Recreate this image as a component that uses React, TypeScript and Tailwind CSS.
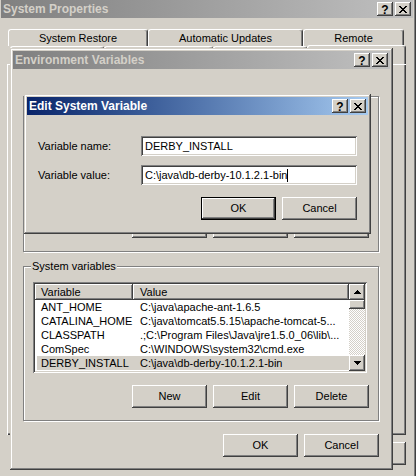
import React from "react";

const RAISED =
  "shadow-[inset_-1px_-1px_#404040,inset_1px_1px_#ffffff,inset_-2px_-2px_#808080,inset_2px_2px_#d4d0c8]";
const FRAME =
  "shadow-[inset_-1px_-1px_#404040,inset_1px_1px_#d4d0c8,inset_-2px_-2px_#808080,inset_2px_2px_#ffffff]";
const SUNKEN =
  "shadow-[inset_1px_1px_#808080,inset_-1px_-1px_#ffffff,inset_2px_2px_#404040,inset_-2px_-2px_#d4d0c8]";

const X_PIX: [number, number][] = [
  [0, 0], [1, 0], [6, 0], [7, 0],
  [1, 1], [2, 1], [5, 1], [6, 1],
  [2, 2], [3, 2], [4, 2], [5, 2],
  [3, 3], [4, 3],
  [2, 4], [3, 4], [4, 4], [5, 4],
  [1, 5], [2, 5], [5, 5], [6, 5],
  [0, 6], [1, 6], [6, 6], [7, 6],
];

function CapBtn({ kind }: { kind: "help" | "close" }) {
  return (
    <div className={`w-[16px] h-[14px] bg-[#d4d0c8] flex items-center justify-center ${RAISED}`}>
      {kind === "close" ? (
        <svg width="8" height="7" viewBox="0 0 8 7" shapeRendering="crispEdges">
          {X_PIX.map(([x, y]) => (
            <rect key={`${x}-${y}`} x={x} y={y} width="1" height="1" fill="#000" />
          ))}
        </svg>
      ) : (
        <span className="text-[12px] font-bold leading-none text-black mt-[1px]">?</span>
      )}
    </div>
  );
}

function TitleBar({ title, active }: { title: string; active?: boolean }) {
  return (
    <div
      className={`h-[18px] shrink-0 flex items-center pl-[2px] pr-[2px] ${
        active
          ? "bg-linear-to-r from-[#0a246a] to-[#a6caf0] text-white"
          : "bg-linear-to-r from-[#808080] to-[#c0c0c0] text-[#d4d0c8]"
      }`}
    >
      <span className="flex-1 font-bold text-[12px] leading-none whitespace-nowrap">{title}</span>
      <CapBtn kind="help" />
      <div className="w-[2px]" />
      <CapBtn kind="close" />
    </div>
  );
}

function Button({ label, def }: { label: string; def?: boolean }) {
  if (def)
    return (
      <div className="w-[75px] h-[23px] border border-black">
        <div className={`w-full h-full flex items-center justify-center ${RAISED}`}>{label}</div>
      </div>
    );
  return (
    <div className={`w-[75px] h-[23px] flex items-center justify-center ${RAISED}`}>{label}</div>
  );
}

function Arrow({ up }: { up?: boolean }) {
  const rows = up
    ? [[3, 1], [2, 3], [1, 5], [0, 7]]
    : [[0, 7], [1, 5], [2, 3], [3, 1]];
  return (
    <svg width="7" height="4" viewBox="0 0 7 4" shapeRendering="crispEdges">
      {rows.map(([x, w], i) => (
        <rect key={i} x={x} y={i} width={w} height="1" fill="#000" />
      ))}
    </svg>
  );
}

function ScrollBar() {
  return (
    <div className="w-[16px] flex flex-col shrink-0">
      <div className={`h-[16px] bg-[#d4d0c8] flex items-center justify-center ${RAISED}`}>
        <Arrow up />
      </div>
      <div className={`h-[9px] bg-[#d4d0c8] ${RAISED}`} />
      <div className="flex-1 [background-image:repeating-conic-gradient(#ffffff_0%_25%,#d4d0c8_0%_50%)] [background-size:2px_2px]" />
      <div className={`h-[16px] bg-[#d4d0c8] flex items-center justify-center ${RAISED}`}>
        <Arrow />
      </div>
    </div>
  );
}

const ROWS: [string, string][] = [
  ["ANT_HOME", "C:\\java\\apache-ant-1.6.5"],
  ["CATALINA_HOME", "C:\\java\\tomcat5.5.15\\apache-tomcat-5..."],
  ["CLASSPATH", ".;C:\\Program Files\\Java\\jre1.5.0_06\\lib\\..."],
  ["ComSpec", "C:\\WINDOWS\\system32\\cmd.exe"],
  ["DERBY_INSTALL", "C:\\java\\db-derby-10.1.2.1-bin"],
];

function ListView({ rows, selected }: { rows: [string, string][]; selected?: number }) {
  return (
    <div className={`w-[334px] h-[91px] bg-white p-[2px] flex ${SUNKEN}`}>
      <div className="flex-1 flex flex-col overflow-hidden">
        <div className="flex h-[16px] shrink-0">
          <div className={`w-[98px] bg-[#d4d0c8] pl-[6px] leading-[16px] ${RAISED}`}>Variable</div>
          <div className={`flex-1 bg-[#d4d0c8] pl-[7px] leading-[16px] ${RAISED}`}>Value</div>
        </div>
        {rows.map(([k, v], i) => (
          <div
            key={k}
            className={`flex h-[14px] leading-[14px] ml-[2px] whitespace-nowrap ${
              i === selected ? "bg-[#d4d0c8]" : ""
            }`}
          >
            <div className="w-[96px] pl-[4px]">{k}</div>
            <div className="flex-1 pl-[7px]">{v}</div>
          </div>
        ))}
      </div>
      <ScrollBar />
    </div>
  );
}

function Group({
  label,
  className,
  children,
}: {
  label?: string;
  className: string;
  children: React.ReactNode;
}) {
  return (
    <div
      className={`relative flex flex-col border border-[#808080] shadow-[inset_1px_1px_#ffffff,1px_1px_#ffffff] ${className}`}
    >
      {label && (
        <span className="absolute left-[7px] top-[-8px] px-[1px] bg-[#d4d0c8] leading-[14px] whitespace-nowrap">
          {label}
        </span>
      )}
      {children}
    </div>
  );
}

function Input({ value, cursor }: { value: string; cursor?: boolean }) {
  return (
    <div className={`w-[216px] h-[20px] bg-white p-[2px] flex items-center ${SUNKEN}`}>
      <span className="pl-[2px] whitespace-nowrap">{value}</span>
      {cursor && <span className="w-px h-[13px] bg-black" />}
    </div>
  );
}

function Tab({ label, w }: { label?: string; w: string }) {
  return (
    <div
      className={`${w} h-full bg-[#d4d0c8] border-t border-l border-r border-t-white border-l-white border-r-[#404040] rounded-t-[3px] shadow-[inset_-1px_0_#808080] flex items-center justify-center whitespace-nowrap`}
    >
      {label}
    </div>
  );
}

export default function App() {
  return (
    <div className="relative w-[416px] h-[476px] overflow-hidden bg-[#d4d0c8] font-['Liberation_Sans',Arial,sans-serif] text-[11px] text-black">
      {/* System Properties */}
      <div className={`absolute left-[-2px] top-[-3px] w-[418px] h-[500px] bg-[#d4d0c8] p-[3px] flex flex-col ${FRAME}`}>
        <TitleBar title="System Properties" />
        <div className="flex flex-col">
          <div className="flex ml-[7px] mt-[11px] h-[17px]">
            <Tab label="System Restore" w="w-[140px]" />
            <Tab label="Automatic Updates" w="w-[155px]" />
            <Tab label="Remote" w="w-[101px]" />
          </div>
          <div className="flex ml-[9px] mr-[7px] h-[18px] items-end">
            <Tab w="w-[94px]" />
            <Tab w="w-[109px]" />
            <Tab w="w-[94px]" />
            <div className="flex-1 h-[20px] -mb-px">
              <Tab w="w-full" />
            </div>
          </div>
          <div className="ml-[6px] mr-[7px] h-[371px] shadow-[inset_1px_1px_#ffffff,inset_-1px_-1px_#404040,inset_-2px_-2px_#808080]" />
          <div className="flex justify-end gap-[6px] mr-[7px] mt-[7px]">
            <Button label="OK" />
            <Button label="Cancel" />
            <Button label="Apply" />
          </div>
        </div>
      </div>

      {/* Environment Variables */}
      <div className={`absolute left-[10px] top-[48px] w-[383px] h-[422px] bg-[#d4d0c8] p-[3px] flex flex-col ${FRAME}`}>
        <TitleBar title="Environment Variables" />
        <div className="flex flex-col pl-[10px] pr-[11px]">
          <Group className="mt-[27px] h-[156px]">
            <div className="ml-[9px] mt-[15px]">
              <ListView rows={[]} />
            </div>
            <div className="flex justify-end gap-[6px] mt-[12px] mr-[9px]">
              <Button label="New" />
              <Button label="Edit" />
              <Button label="Delete" />
            </div>
          </Group>
          <Group label="System variables" className="mt-[14px] h-[155px]">
            <div className="ml-[9px] mt-[15px]">
              <ListView rows={ROWS} selected={4} />
            </div>
            <div className="flex justify-end gap-[6px] mt-[12px] mr-[9px]">
              <Button label="New" />
              <Button label="Edit" />
              <Button label="Delete" />
            </div>
          </Group>
          <div className="flex justify-end gap-[6px] mt-[13px]">
            <Button label="OK" />
            <Button label="Cancel" />
          </div>
        </div>
      </div>

      {/* Edit System Variable */}
      <div className={`absolute left-[24px] top-[94px] w-[347px] h-[140px] bg-[#d4d0c8] p-[3px] flex flex-col ${FRAME}`}>
        <TitleBar title="Edit System Variable" active />
        <div className="flex flex-col pl-[11px] pr-[11px]">
          <div className="flex items-center mt-[21px]">
            <div className="w-[103px]">Variable name:</div>
            <Input value="DERBY_INSTALL" />
          </div>
          <div className="flex items-center mt-[9px]">
            <div className="w-[103px]">Variable value:</div>
            <Input value="C:\java\db-derby-10.1.2.1-bin" cursor />
          </div>
          <div className="flex justify-end gap-[6px] mt-[12px]">
            <Button label="OK" def />
            <Button label="Cancel" />
          </div>
        </div>
      </div>
    </div>
  );
}
